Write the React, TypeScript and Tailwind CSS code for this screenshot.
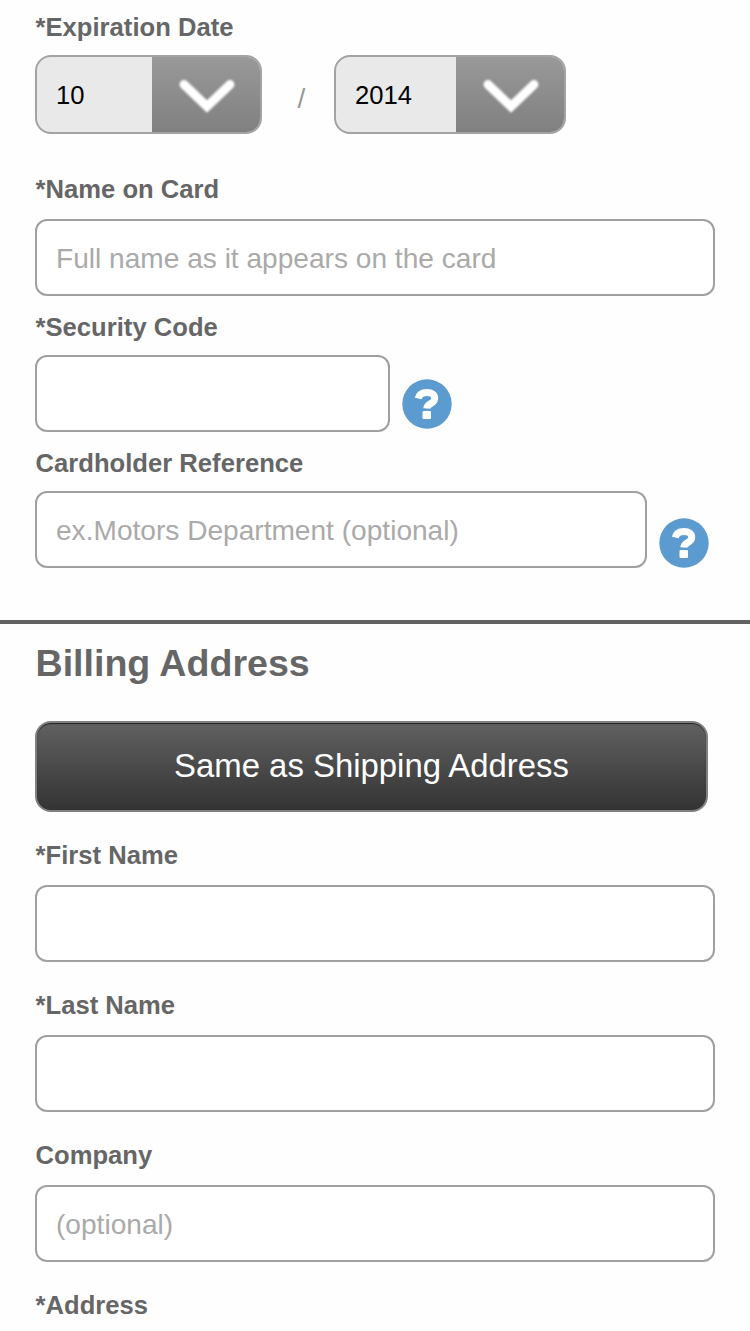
import React from "react";

function Label({ children, className = "" }: { children: React.ReactNode; className?: string }) {
  return (
    <label className={`block h-[30px] pl-[0.5px] whitespace-nowrap text-[25.6px] leading-[30px] font-bold tracking-[0.02px] text-[#666] ${className}`}>
      {children}
    </label>
  );
}

function Field({ placeholder, className = "w-[680px]" }: { placeholder?: string; className?: string }) {
  return (
    <input
      type="text"
      placeholder={placeholder}
      className={`block h-[77px] shrink-0 rounded-xl border-2 border-[#a0a0a0] bg-white px-[19px] pt-0.5 text-[28.1px] text-black outline-none placeholder:text-[#aaa] ${className}`}
    />
  );
}

function Select({ value, className }: { value: string; className: string }) {
  return (
    <button
      type="button"
      className={`flex h-[79px] overflow-hidden rounded-2xl border-2 border-[#a3a3a3] bg-[#e9e9e9] text-left ${className}`}
    >
      <span className="flex h-full flex-1 items-center pt-0.5 pl-[19px] text-[25.6px] text-black">{value}</span>
      <span className="flex h-full w-[108px] items-center justify-center bg-linear-to-b from-[#999] to-[#808080] pt-0.5 pl-0.5">
        <svg width="64" height="44" viewBox="0 0 64 44" className="blur-[1px]">
          <path d="M9 10.500 L32 32.500 L55 10.500" fill="none" stroke="#fff" strokeWidth="9" strokeLinecap="round" />
        </svg>
      </span>
    </button>
  );
}

function HelpIcon({ className }: { className: string }) {
  return (
    <svg width="50" height="50" viewBox="0 0 50 50" className={`shrink-0 ${className}`}>
      <circle cx="25" cy="25" r="24.700" fill="#5b9bd0" />
      <g className="blur-[0.7px]">
        <path
          d="M16.300 19.500 C17.300 14.700 20.700 13.500 25 13.500 C30 13.500 32.700 15.800 32.700 19.200 C32.700 22.100 30.700 23.500 28.300 24.800 C26 26 25 27 24.800 29.500"
          fill="none"
          stroke="#fff"
          strokeWidth="7"
        />
        <rect x="20.500" y="32" width="8.500" height="8" rx="1" fill="#fff" />
      </g>
    </svg>
  );
}

export default function App() {
  return (
    <main className="flex h-[1331px] w-[750px] flex-col overflow-hidden bg-[#fefefe] font-['Liberation_Sans',Arial,sans-serif]">
      <section className="px-[35px] pt-3">
        <Label>*Expiration Date</Label>
        <div className="mt-[13px] flex items-center">
          <Select value="10" className="w-[227px]" />
          <span className="w-[72px] pt-2 pl-[7px] text-center text-[28px] text-[#999]">/</span>
          <Select value="2014" className="w-[232px]" />
        </div>

        <Label className="mt-10">*Name on Card</Label>
        <div className="mt-[15px]">
          <Field placeholder="Full name as it appears on the card" />
        </div>

        <Label className="mt-4">*Security Code</Label>
        <div className="mt-[13px] flex">
          <Field className="w-[355px]" />
          <HelpIcon className="mt-[24px] ml-[12px]" />
        </div>

        <Label className="mt-4">Cardholder Reference</Label>
        <div className="mt-[13px] flex">
          <Field placeholder="ex.Motors Department (optional)" className="w-[612px]" />
          <HelpIcon className="mt-[27px] ml-[12px]" />
        </div>
      </section>

      <section className="mt-[52px] border-t-[4.500px] border-[#636363] px-[35px]">
        <h2 className="mt-[17px] h-[44px] pl-[0.5px] text-[37.600px] leading-[44px] font-bold text-[#666]">Billing Address</h2>
        <button
          type="button"
          className="mt-9 flex h-[91px] w-[673px] items-center justify-center rounded-2xl border-[2.500px] border-[#808080] bg-linear-to-b from-[#616161] to-[#343434] pb-0.5 text-[32.900px] text-white inset-shadow-[0_1px_1px_#222]"
        >
          Same as Shipping Address
        </button>

        <Label className="mt-7">*First Name</Label>
        <div className="mt-[15px]">
          <Field />
        </div>

        <Label className="mt-7">*Last Name</Label>
        <div className="mt-[15px]">
          <Field />
        </div>

        <Label className="mt-7">Company</Label>
        <div className="mt-[15px]">
          <Field placeholder="(optional)" />
        </div>

        <Label className="mt-7">*Address</Label>
      </section>
    </main>
  );
}
